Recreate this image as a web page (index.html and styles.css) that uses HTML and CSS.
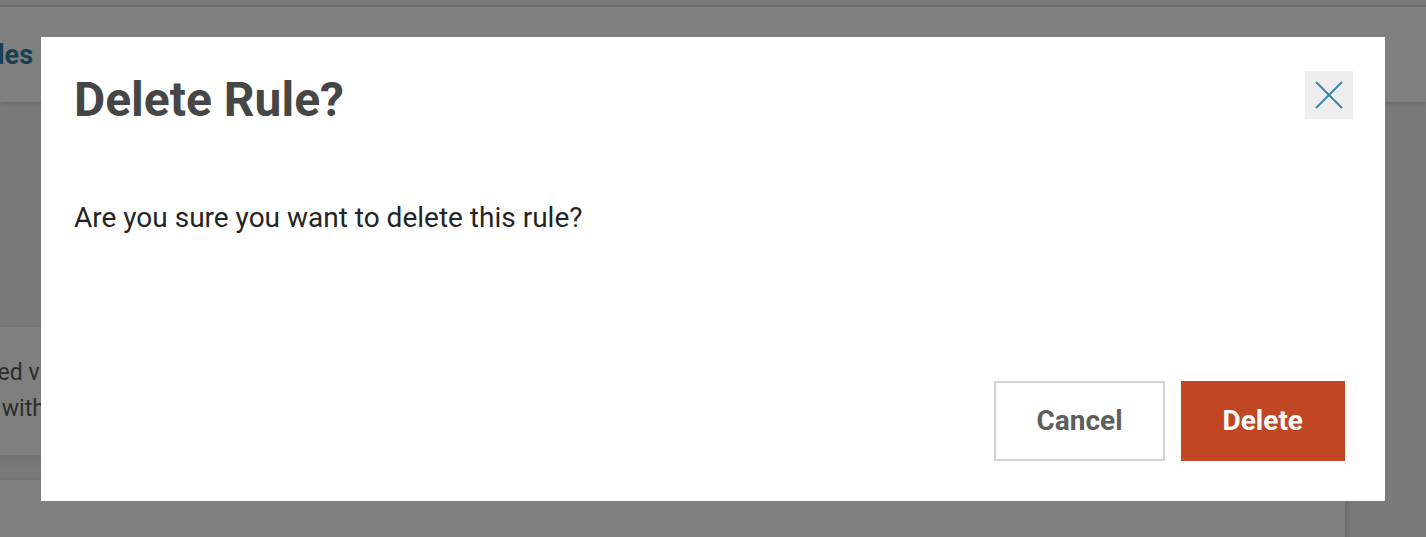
FILE: index.html
```html
<!DOCTYPE html>
<html lang="en">
<head>
    <meta charset="UTF-8">
    <meta name="viewport" content="width=device-width, initial-scale=1.0">
    <title>Rules</title>
    <link rel="icon" href="data:,">
    <link rel="stylesheet" href="styles.css">
</head>
<body>
    <div class="topline"></div>
    <header class="page-header">
        <h1 class="page-title">Rules</h1>
    </header>
    <main class="page-body">
        <div class="card">
            <p>Rules can be triggered via the rule editor,<br>or run on schedules with a timer.</p>
        </div>
        <div class="card card-next"></div>
    </main>

    <div class="overlay">
        <div class="modal" role="dialog" aria-labelledby="modalTitle">
            <div class="modal-header">
                <h2 id="modalTitle" class="modal-title">Delete Rule?</h2>
                <button class="close-btn" aria-label="Close">
                    <svg width="28" height="28" viewBox="0 0 28 28">
                        <path d="M1 1 L27 27 M27 1 L1 27" stroke="#3a86a8" stroke-width="2" fill="none"/>
                    </svg>
                </button>
            </div>
            <p class="modal-text">Are you sure you want to delete this rule?</p>
            <div class="modal-footer">
                <button class="btn btn-cancel">Cancel</button>
                <button class="btn btn-delete">Delete</button>
            </div>
        </div>
    </div>
</body>
</html>
```

FILE: styles.css
```css
html, body {
    margin: 0;
    height: 100%;
    overflow: hidden;
}
body {
    font-family: Roboto, "Liberation Sans", sans-serif;
    background-color: #f4f4f4;
    padding-top: 5px;
    box-sizing: border-box;
}
.topline {
    height: 2px;
    background-color: #dcdcdc;
}
.page-header {
    height: 95px;
    background-color: #fff;
    box-shadow: 0 2px 6px rgba(0, 0, 0, 0.12);
    display: flex;
    align-items: center;
    position: relative;
}
.page-title {
    margin: 0 0 0 -35px;
    font-size: 27px;
    font-weight: 700;
    color: #2f7ea3;
}
.page-body {
    width: 1345px;
    padding-top: 225px;
}
.card {
    background-color: #fff;
    margin-left: -300px;
    height: 128px;
    box-shadow: 0 3px 10px rgba(0, 0, 0, 0.12);
    overflow: hidden;
}
.card p {
    margin: 28px 0 0 0;
    padding-left: 95px;
    font-size: 23px;
    line-height: 36px;
    color: #5a5a5a;
    white-space: nowrap;
}
.card-next {
    margin-top: 25px;
    height: 200px;
    box-shadow: 2px 0 6px rgba(0, 0, 0, 0.12);
}

/* modal */
.overlay {
    position: fixed;
    inset: 0;
    background-color: rgba(0, 0, 0, 0.5);
    display: flex;
    align-items: center;
    justify-content: center;
}
.modal {
    width: 1344px;
    height: 464px;
    box-sizing: border-box;
    background-color: #fff;
    padding: 34px 32px 40px 33px;
    display: flex;
    flex-direction: column;
}
.modal-header {
    display: flex;
    justify-content: space-between;
    align-items: flex-start;
}
.modal-title {
    margin: 2px 0 0 0;
    font-size: 48px;
    line-height: 54px;
    font-weight: 700;
    color: #464646;
}
.close-btn {
    width: 48px;
    height: 48px;
    padding: 0;
    border: none;
    background-color: #eeeef0;
    display: flex;
    align-items: center;
    justify-content: center;
    cursor: pointer;
}
.modal-text {
    margin: 70px 0 0 0;
    font-size: 28px;
    line-height: 42px;
    color: #242424;
}
.modal-footer {
    margin-top: auto;
    margin-right: 8px;
    display: flex;
    justify-content: flex-end;
    gap: 16px;
}
.btn {
    height: 80px;
    padding: 0 40px;
    border: 2px solid transparent;
    font-family: Roboto, "Liberation Sans", sans-serif;
    font-size: 28px;
    font-weight: 700;
    cursor: pointer;
}
.btn-cancel {
    background-color: #fff;
    border-color: #d2d3d7;
    color: #5e5e5e;
}
.btn-delete {
    background-color: #c14624;
    border-color: #c14624;
    color: #fff;
}
```
